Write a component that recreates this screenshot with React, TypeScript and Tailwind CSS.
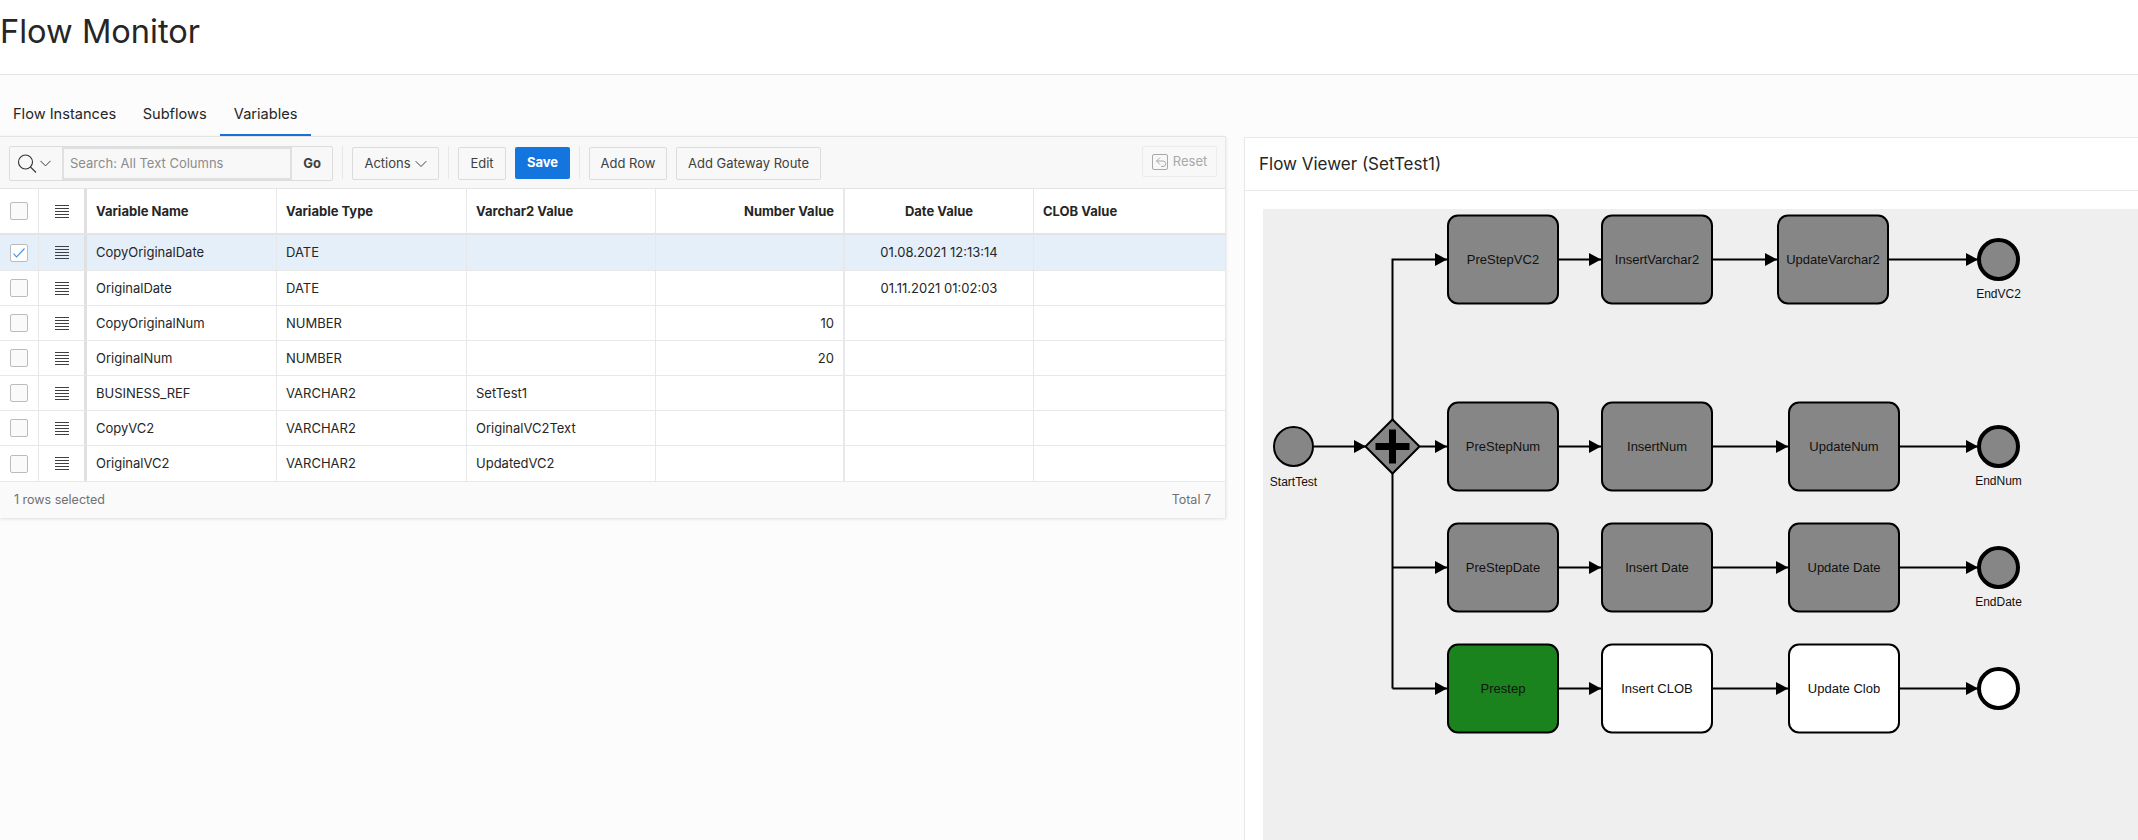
import { ChevronDown } from "lucide-react";

const rows = [
  { name: "CopyOriginalDate", type: "DATE", vc: "", num: "", date: "01.08.2021 12:13:14", h: "h-[36px]", selected: true },
  { name: "OriginalDate", type: "DATE", vc: "", num: "", date: "01.11.2021 01:02:03", h: "h-[35px]" },
  { name: "CopyOriginalNum", type: "NUMBER", vc: "", num: "10", date: "", h: "h-[35px]" },
  { name: "OriginalNum", type: "NUMBER", vc: "", num: "20", date: "", h: "h-[35px]" },
  { name: "BUSINESS_REF", type: "VARCHAR2", vc: "SetTest1", num: "", date: "", h: "h-[35px]" },
  { name: "CopyVC2", type: "VARCHAR2", vc: "OriginalVC2Text", num: "", date: "", h: "h-[35px]" },
  { name: "OriginalVC2", type: "VARCHAR2", vc: "UpdatedVC2", num: "", date: "", h: "h-[36px]" },
];

const gridCols = "grid grid-cols-[39px_48px_190px_190px_189px_189px_189px_191px]";

function Lines() {
  return (
    <svg width="14" height="13" viewBox="0 0 14 13" className="text-[#404040]">
      <path d="M0 .5h14M0 3.5h14M0 6.5h14M0 9.5h14M0 12.5h14" stroke="currentColor" strokeWidth="1" />
    </svg>
  );
}

function Check({ on }: { on?: boolean }) {
  return (
    <div className={`flex h-[18px] w-[18px] items-center justify-center rounded-[2px] border border-[#bcbcbc] ${on ? "bg-white" : "bg-[#fafafa]"}`}>
      {on && (
        <svg width="12" height="10" viewBox="0 0 12 10" fill="none">
          <path d="M.5 5.5l3 3.5L11.5 .5" stroke="#3d8fe0" strokeWidth="1.1" />
        </svg>
      )}
    </div>
  );
}

function Btn({ children, w }: { children: React.ReactNode; w: string }) {
  return (
    <div className={`mt-px flex h-[33px] items-center justify-center rounded-[2px] border border-[#dcdcdc] bg-[#f8f8f8] text-[13px] text-[#404040] ${w}`}>
      {children}
    </div>
  );
}

function Divider({ ml }: { ml: string }) {
  return <div className={`h-[33px] w-px bg-[#e8e8e8] ${ml}`} />;
}

function Arrow({ x, y }: { x: number; y: number }) {
  return <path d={`M${x - 12} ${y - 6.5}L${x} ${y}L${x - 12} ${y + 6.5}Z`} fill="#000" />;
}

function Task({ x, y, label, fill = "#868686" }: { x: number; y: number; label: string; fill?: string }) {
  return (
    <g>
      <rect x={x} y={y - 44} width={110} height={88} rx={10} fill={fill} stroke="#000" strokeWidth={2} />
      <text x={x + 55} y={y + 4.5} textAnchor="middle" fontSize={13} fill="#111" fontFamily="Liberation Sans, Arial, sans-serif">
        {label}
      </text>
    </g>
  );
}

function End({ y, label, fill = "#868686" }: { y: number; label?: string; fill?: string }) {
  return (
    <g>
      <circle cx={1998.5} cy={y} r={19.5} fill={fill} stroke="#000" strokeWidth={4} />
      {label && (
        <text x={1998.5} y={y + 38.5} textAnchor="middle" fontSize={12} fill="#111" fontFamily="Liberation Sans, Arial, sans-serif">
          {label}
        </text>
      )}
    </g>
  );
}

function Diagram() {
  const y1 = 259.5;
  const y2 = 446.5;
  const y3 = 567.5;
  const y4 = 688.5;
  return (
    <svg width="875" height="631" viewBox="1263 209 875 631" className="block">
      <g stroke="#000" strokeWidth="2" fill="none">
        <path d={`M1392.5 ${y4 - 0}V${y1}H1447`} />
        <path d={`M1392.5 ${y3}H1447M1392.5 ${y4}H1447`} />
        <path d={`M1314 ${y2}H1366M1420 ${y2}H1447`} />
        <path d={`M1558 ${y1}H1601M1712 ${y1}H1777M1888 ${y1}H1978`} />
        <path d={`M1558 ${y2}H1601M1712 ${y2}H1788M1899 ${y2}H1978`} />
        <path d={`M1558 ${y3}H1601M1712 ${y3}H1788M1899 ${y3}H1978`} />
        <path d={`M1558 ${y4}H1601M1712 ${y4}H1788M1899 ${y4}H1978`} />
      </g>
      {[y1, y2, y3, y4].map((y) => (
        <g key={y}>
          <Arrow x={1447} y={y} />
          <Arrow x={1601} y={y} />
          <Arrow x={y === y1 ? 1777 : 1788} y={y} />
          <Arrow x={1978} y={y} />
        </g>
      ))}
      <Arrow x={1366} y={y2} />

      <circle cx={1293.5} cy={y2} r={19.5} fill="#868686" stroke="#000" strokeWidth={2} />
      <text x={1293.5} y={y2 + 39} textAnchor="middle" fontSize={12} fill="#111" fontFamily="Liberation Sans, Arial, sans-serif">
        StartTest
      </text>
      <path d={`M1392.5 ${y2 - 27}L1419.5 ${y2}L1392.5 ${y2 + 27}L1365.5 ${y2}Z`} fill="#868686" stroke="#000" strokeWidth={2} />
      <path d={`M1389 ${y2 - 17}h7v13.5h13.5v7h-13.5v13.5h-7v-13.5h-13.5v-7h13.5Z`} fill="#000" />

      <Task x={1448} y={y1} label="PreStepVC2" />
      <Task x={1602} y={y1} label="InsertVarchar2" />
      <Task x={1778} y={y1} label="UpdateVarchar2" />
      <End y={y1} label="EndVC2" />

      <Task x={1448} y={y2} label="PreStepNum" />
      <Task x={1602} y={y2} label="InsertNum" />
      <Task x={1789} y={y2} label="UpdateNum" />
      <End y={y2} label="EndNum" />

      <Task x={1448} y={y3} label="PreStepDate" />
      <Task x={1602} y={y3} label="Insert Date" />
      <Task x={1789} y={y3} label="Update Date" />
      <End y={y3} label="EndDate" />

      <Task x={1448} y={y4} label="Prestep" fill="#1a831e" />
      <Task x={1602} y={y4} label="Insert CLOB" fill="#fff" />
      <Task x={1789} y={y4} label="Update Clob" fill="#fff" />
      <End y={y4} fill="#fff" />
    </svg>
  );
}

export default function App() {
  return (
    <div className="flex h-[840px] w-[2138px] flex-col overflow-hidden bg-[#fcfcfc] font-['Inter',sans-serif] text-[#262626]">
      <header className="flex h-[75px] shrink-0 items-start border-b border-[#e4e4e4] bg-white">
        <h1 className="mt-[11px] text-[32.6px] leading-[40px]">Flow Monitor</h1>
      </header>

      <div className="flex h-[61px] shrink-0 items-end">
        <div className="flex h-[41px] items-center border-b-2 border-transparent px-[13px] pt-px text-[14.6px]">Flow Instances</div>
        <div className="flex h-[41px] w-[91px] items-center justify-center border-b-2 border-transparent pt-px text-[14.6px]">Subflows</div>
        <div className="flex h-[41px] w-[91px] items-center justify-center border-b-2 border-[#1a73d8] pt-px text-[14.6px]">Variables</div>
      </div>

      <div className="flex min-h-0 flex-1 items-start">
        <section className="w-[1226px] shrink-0 border-r border-[#e8e8e8] shadow-[0_1px_3px_rgba(0,0,0,0.12)]">
          <div className="flex h-[53px] items-start border-y border-[#e4e4e4] bg-[#f8f8f8] pl-[9px] pt-[9px]">
            <div className="flex h-[35px] w-[324px] items-stretch rounded-[2px] border border-[#dcdcdc]">
              <div className="flex w-[52px] items-center pl-[7px]">
                <svg width="20" height="20" viewBox="0 0 20 20" fill="none" stroke="#333" strokeWidth="1.1">
                  <circle cx="8.5" cy="8" r="7" />
                  <path d="M13.5 13l5.5 5.5" />
                </svg>
                <ChevronDown size={19} strokeWidth={1.2} className="-ml-[1px] text-[#333]" />
              </div>
              <div className="flex w-[230px] items-center border-2 border-[#e0e0e0] pl-[6px] pt-px text-[13px] text-[#8c8c8c]">
                Search: All Text Columns
              </div>
              <div className="flex flex-1 items-center justify-center pt-px text-[13px] font-bold text-[#404040]">Go</div>
            </div>
            <Divider ml="ml-[9px]" />
            <div className="ml-[9px]">
              <Btn w="w-[87px]">
                <span className="flex items-center">
                  Actions
                  <ChevronDown size={20} strokeWidth={1.2} className="-mr-[4px]" />
                </span>
              </Btn>
            </div>
            <Divider ml="ml-[9px]" />
            <div className="ml-[9px]">
              <Btn w="w-[48px]">Edit</Btn>
            </div>
            <div className="ml-[9px] mt-px flex h-[32px] w-[55px] items-center justify-center rounded-[2px] bg-[#1375dd] text-[13px] font-bold text-white">
              Save
            </div>
            <Divider ml="ml-[9px]" />
            <div className="ml-[9px]">
              <Btn w="w-[78px]">Add Row</Btn>
            </div>
            <div className="ml-[9px]">
              <Btn w="w-[145px]">Add Gateway Route</Btn>
            </div>
            <div className="ml-[321px] flex h-[31px] w-[75px] items-center justify-center gap-[5px] rounded-[2px] border border-[#ececec] text-[13px] text-[#a8a8a8]">
              <svg width="16" height="16" viewBox="0 0 16 16" fill="none" stroke="#a8a8a8" strokeWidth="1">
                <rect x=".5" y=".5" width="15" height="15" rx="1.5" />
                <path d="M8 3.5L4.5 7 8 10.5M4.5 7h6.5a2.2 2.2 0 0 1 0 5.5H9" />
              </svg>
              Reset
            </div>
          </div>

          <div className="bg-white">
            <div className={`${gridCols} h-[46px] border-b-2 border-[#e4e4e4] text-[13px] font-bold`}>
              <div className="flex items-center pl-[10px] border-r border-[#e8e8e8]">
                <Check />
              </div>
              <div className="flex items-center justify-center border-r-[3px] border-[#e0e0e0]">
                <Lines />
              </div>
              <div className="flex items-center px-[9px] pt-px border-r border-[#e8e8e8]">Variable Name</div>
              <div className="flex items-center px-[9px] pt-px border-r border-[#e8e8e8]">Variable Type</div>
              <div className="flex items-center px-[9px] pt-px border-r border-[#e8e8e8]">Varchar2 Value</div>
              <div className="flex items-center justify-end px-[9px] pt-px border-r-2 border-[#e8e8e8]">Number Value</div>
              <div className="flex items-center justify-center pt-px border-r border-[#e8e8e8]">Date Value</div>
              <div className="flex items-center px-[9px] pt-px">CLOB Value</div>
            </div>
            {rows.map((r) => (
              <div
                key={r.name}
                className={`${gridCols} ${r.h} border-b border-[#e8e8e8] text-[13px] ${r.selected ? "bg-[#e5eff9]" : ""}`}
              >
                <div className="flex items-center pl-[10px] border-r border-[#e8e8e8]">
                  <Check on={r.selected} />
                </div>
                <div className="flex items-center justify-center border-r-[3px] border-[#e0e0e0]">
                  <Lines />
                </div>
                <div className="flex items-center px-[9px] pt-px border-r border-[#e8e8e8]">{r.name}</div>
                <div className="flex items-center px-[9px] pt-px border-r border-[#e8e8e8]">{r.type}</div>
                <div className="flex items-center px-[9px] pt-px border-r border-[#e8e8e8]">{r.vc}</div>
                <div className="flex items-center justify-end px-[9px] pt-px border-r-2 border-[#e8e8e8]">{r.num}</div>
                <div className="flex items-center justify-center pt-px border-r border-[#e8e8e8]">{r.date}</div>
                <div />
              </div>
            ))}
          </div>
          <div className="flex h-[36px] items-center justify-between bg-[#fafafa] px-[14px] text-[12.5px] text-[#707070]">
            <span>1 rows selected</span>
            <span>Total 7</span>
          </div>
        </section>

        <section className="ml-[18px] mt-px flex h-[703px] flex-1 flex-col border-l border-t border-[#e8e8e8] bg-white">
          <div className="flex h-[53px] shrink-0 items-center border-b border-[#e8e8e8] pl-[14px] pt-px text-[17px]">
            Flow Viewer (SetTest1)
          </div>
          <div className="pl-[18px] pt-[18px]">
            <div className="h-[631px] bg-[#efefef]">
              <Diagram />
            </div>
          </div>
        </section>
      </div>
    </div>
  );
}
